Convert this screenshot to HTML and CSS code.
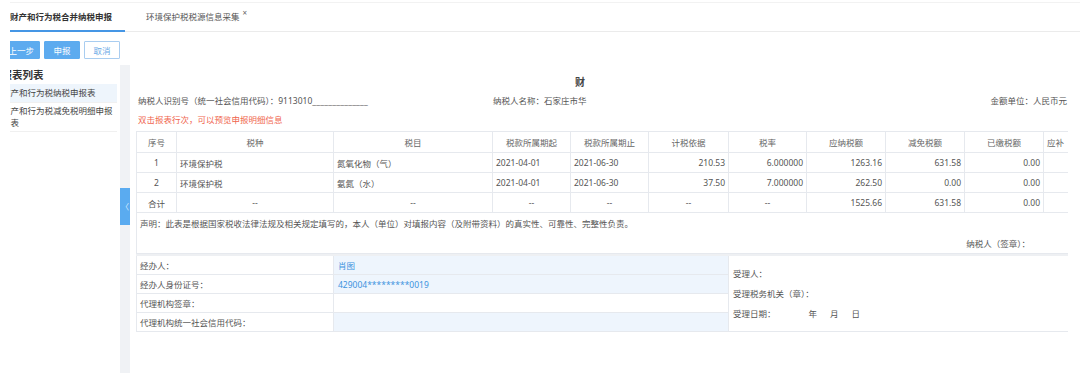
FILE: index.html
```html
<!DOCTYPE html>
<html lang="zh-CN">
<head>
    <meta charset="UTF-8">
    <meta name="viewport" content="width=device-width, initial-scale=1.0">
    <title>财产和行为税合并纳税申报</title>
    <link rel="stylesheet" href="styles.css">
</head>
<body>
    <div class="page">
        <div class="page-inner">

            <!-- Tabs -->
            <div class="tabs">
                <div class="tab tab-active">财产和行为税合并纳税申报</div>
                <div class="tab">环境保护税税源信息采集<span class="tab-close">×</span></div>
            </div>

            <!-- Toolbar -->
            <div class="toolbar">
                <button class="btn btn-primary">上一步</button>
                <button class="btn btn-primary">申报</button>
                <button class="btn btn-plain">取消</button>
            </div>

            <div class="workspace">
                <!-- Report list -->
                <aside class="sidebar">
                    <div class="sidebar-title">报表列表</div>
                    <div class="sidebar-item sidebar-item-active">财产和行为税纳税申报表</div>
                    <div class="sidebar-item">财产和行为税减免税明细申报表</div>
                </aside>

                <div class="gutter">
                    <div class="gutter-toggle">〈</div>
                </div>

                <!-- Report body -->
                <main class="report">
                    <div class="report-title">财</div>

                    <div class="report-info">
                        <div>纳税人识别号（统一社会信用代码）：9113010<span class="masked">_ _ _ _ _ _ _ _ _ _ _ _ _ _</span></div>
                        <div>纳税人名称：石家庄市华</div>
                        <div>金额单位：人民币元</div>
                    </div>

                    <div class="report-hint">双击报表行次，可以预览申报明细信息</div>

                    <div class="sheet">
                        <table class="tax-table">
                            <colgroup>
                                <col style="width:40px">
                                <col style="width:157px">
                                <col style="width:159px">
                                <col style="width:78px">
                                <col style="width:78px">
                                <col style="width:80px">
                                <col style="width:78px">
                                <col style="width:79px">
                                <col style="width:79px">
                                <col style="width:79px">
                                <col style="width:79px">
                            </colgroup>
                            <thead>
                                <tr>
                                    <th>序号</th>
                                    <th>税种</th>
                                    <th>税目</th>
                                    <th>税款所属期起</th>
                                    <th>税款所属期止</th>
                                    <th>计税依据</th>
                                    <th>税率</th>
                                    <th>应纳税额</th>
                                    <th>减免税额</th>
                                    <th>已缴税额</th>
                                    <th class="th-left">应补（退）税额</th>
                                </tr>
                            </thead>
                            <tbody>
                                <tr>
                                    <td class="center">1</td>
                                    <td>环境保护税</td>
                                    <td>氮氧化物（气）</td>
                                    <td>2021-04-01</td>
                                    <td>2021-06-30</td>
                                    <td class="num">210.53</td>
                                    <td class="num">6.000000</td>
                                    <td class="num">1263.16</td>
                                    <td class="num">631.58</td>
                                    <td class="num">0.00</td>
                                    <td class="num">631.58</td>
                                </tr>
                                <tr>
                                    <td class="center">2</td>
                                    <td>环境保护税</td>
                                    <td>氨氮（水）</td>
                                    <td>2021-04-01</td>
                                    <td>2021-06-30</td>
                                    <td class="num">37.50</td>
                                    <td class="num">7.000000</td>
                                    <td class="num">262.50</td>
                                    <td class="num">0.00</td>
                                    <td class="num">0.00</td>
                                    <td class="num">262.50</td>
                                </tr>
                                <tr>
                                    <td class="center">合计</td>
                                    <td class="center">--</td>
                                    <td class="center">--</td>
                                    <td class="center">--</td>
                                    <td class="center">--</td>
                                    <td class="center">--</td>
                                    <td class="center">--</td>
                                    <td class="num">1525.66</td>
                                    <td class="num">631.58</td>
                                    <td class="num">0.00</td>
                                    <td class="num">894.08</td>
                                </tr>
                                <tr>
                                    <td colspan="11" class="statement">
                                        <div>声明：此表是根据国家税收法律法规及相关规定填写的，本人（单位）对填报内容（及附带资料）的真实性、可靠性、完整性负责。</div>
                                        <div class="statement-sign">纳税人（签章）：</div>
                                    </td>
                                </tr>
                            </tbody>
                        </table>

                        <table class="sign-table">
                            <colgroup>
                                <col style="width:197px">
                                <col style="width:395px">
                                <col style="width:394px">
                            </colgroup>
                            <tr>
                                <td>经办人：</td>
                                <td class="sign-value">肖图</td>
                                <td rowspan="4" class="sign-accept">
                                    <div>受理人：</div>
                                    <div>受理税务机关（章）：</div>
                                    <div>受理日期：<span class="date-year">年</span><span class="date-part">月</span><span class="date-part">日</span></div>
                                </td>
                            </tr>
                            <tr>
                                <td>经办人身份证号：</td>
                                <td class="sign-value">429004*********0019</td>
                            </tr>
                            <tr>
                                <td>代理机构签章：</td>
                                <td class="sign-empty"></td>
                            </tr>
                            <tr>
                                <td>代理机构统一社会信用代码：</td>
                                <td class="sign-value"></td>
                            </tr>
                        </table>
                    </div>
                </main>
            </div>
        </div>
    </div>
</body>
</html>
```

FILE: styles.css
```css
/* General */
body {
    margin: 0;
    font-family: "Noto Sans", "Noto Sans CJK SC", sans-serif;
    font-size: 8.5px;
    color: #555;
    background: #fff;
}

.page {
    margin-left: 10px;
    height: 373px;
    overflow: hidden;
}

/* page is scrolled a little to the right */
.page-inner {
    margin-left: -9px;
}

/* Tabs */
.tabs {
    display: flex;
    align-items: flex-start;
    height: 28px;
    margin-top: 2px;
    border-top: 1px solid #f2f2f2;
    border-bottom: 1px solid #ebebeb;
}

.tab {
    line-height: 27px;
    padding: 0 13px 0 9px;
    border-bottom: 2px solid transparent;
    color: #555;
    white-space: nowrap;
}

.tab + .tab {
    margin-left: 12px;
}

.tab-active {
    color: #333;
    font-weight: bold;
    border-bottom-color: #4596e5;
}

.tab-close {
    position: relative;
    top: -4px;
    margin-left: 3px;
    font-size: 8px;
    color: #666;
}

/* Toolbar */
.toolbar {
    display: flex;
    gap: 4px;
    margin: 9px 0 0 1.5px;
}

.btn {
    box-sizing: border-box;
    height: 18px;
    min-width: 36px;
    padding: 0 5px;
    font-family: inherit;
    font-size: 8.5px;
    border-radius: 1px;
    border: 1px solid #5dabef;
    cursor: pointer;
}

.btn-primary {
    background: #5dabef;
    color: #fff;
}

.btn-plain {
    background: #fff;
    border-color: #a9cdf0;
    color: #6aa9e6;
}

/* Workspace */
.workspace {
    display: flex;
    height: 308px;
    margin-top: 6px;
}

.sidebar {
    flex: none;
    width: 116px;
}

.sidebar-title {
    height: 19px;
    line-height: 20px;
    padding-left: 0.5px;
    font-size: 10.5px;
    font-weight: bold;
    color: #333;
}

/* first char sits under the scrolled-off edge, wrapped lines do not */
.sidebar-item {
    padding: 2px 0 2px 9.5px;
    text-indent: -8.5px;
    line-height: 12px;
    color: #444;
    border-bottom: 1px solid #f0f0f0;
}

.sidebar-item-active {
    padding-top: 3px;
    padding-bottom: 3px;
    background: #eef5fc;
}

.gutter {
    flex: none;
    width: 10px;
    margin-left: 3px;
    background: #f0f2f5;
}

.gutter-toggle {
    margin-top: 123px;
    height: 37px;
    display: flex;
    align-items: center;
    justify-content: center;
    background: #5aabf0;
    color: #dbeeff;
    font-size: 8px;
}

/* Report */
.report {
    flex: 1;
    min-width: 0;
    padding: 0 12px 0 6px;
}

.report-title {
    margin-top: 10px;
    padding-right: 44px;
    line-height: 14px;
    text-align: center;
    font-size: 10px;
    font-weight: bold;
    color: #444;
}

.report-info {
    display: grid;
    grid-template-columns: 355px 1fr auto;
    margin-top: 5px;
    padding: 0 1px 0 2px;
    line-height: 14px;
}

.masked {
    letter-spacing: -1px;
    color: #666;
}

.report-hint {
    margin-top: 5px;
    padding-left: 2px;
    line-height: 14px;
    color: #f0664f;
}

.sheet {
    margin-top: 4px;
    overflow: hidden;
}

.tax-table,
.sign-table {
    width: 986px;
    table-layout: fixed;
    border-collapse: collapse;
}

.tax-table th,
.tax-table td,
.sign-table td {
    border: 1px solid #e6e9ee;
    padding: 0 3px;
    white-space: nowrap;
    overflow: hidden;
}

.tax-table th {
    height: 20px;
    font-weight: normal;
    color: #666;
}

.tax-table .th-left {
    text-align: left;
}

.tax-table td {
    height: 19px;
}

.center {
    text-align: center;
}

.num {
    text-align: right;
}

.tax-table td.statement {
    height: auto;
    padding: 4px 92px 2px 3px;
    line-height: 14px;
    white-space: normal;
}

.statement-sign {
    margin-top: 6px;
    text-align: right;
}

.sign-table {
    border-top: 2px solid #eef0f3;
}

.sign-table td {
    height: 18px;
}

.sign-value {
    background: #eef5fd;
    color: #3d93de;
}

.sign-table td.sign-value {
    padding-left: 4px;
}

.sign-table td.sign-accept {
    vertical-align: top;
    padding: 8px 4px 0;
    line-height: 20px;
}

.date-year {
    margin-left: 33px;
}

.date-part {
    margin-left: 13px;
}
```
